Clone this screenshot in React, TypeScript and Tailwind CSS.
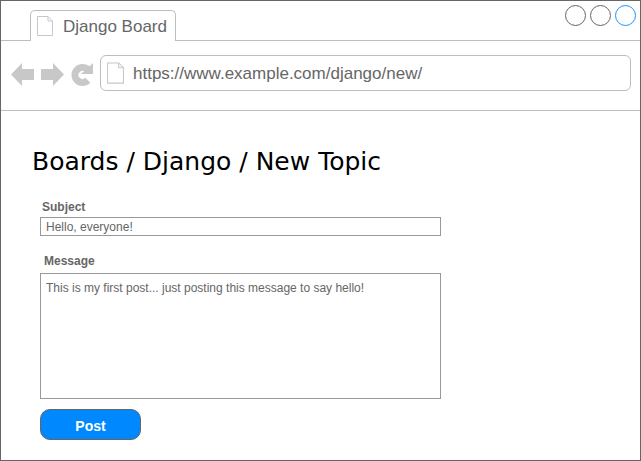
const Page = ({ className }: { className: string }) => (
  <svg viewBox="0 0 16 20" className={className} fill="none">
    <path d="M0.5 0.5H11L15.5 5V19.5H0.5Z" fill="#fff" stroke="#c8c8c8" />
    <path d="M11 0.5V5H15.5" stroke="#c8c8c8" />
  </svg>
);

export default function App() {
  return (
    <div className="flex h-[461px] w-[641px] flex-col border border-[#666] bg-white font-['Liberation_Sans',sans-serif] text-[#666]">
      {/* tab strip */}
      <div className="relative flex h-[40px] shrink-0 items-end border-b border-[#bdbdbd] pl-[29px]">
        <div className="relative top-px flex h-[31px] w-[146px] items-center gap-[10px] rounded-t-[5px] border border-b-0 border-[#bdbdbd] bg-white pl-[6px]">
          <Page className="h-[20px] w-[16px]" />
          <span className="pt-[1px] text-[17px]">Django Board</span>
        </div>
        <div className="absolute right-[4px] top-[4px] flex gap-[4px]">
          <span className="h-[21px] w-[21px] rounded-full border border-[#666]" />
          <span className="h-[21px] w-[21px] rounded-full border border-[#666]" />
          <span className="h-[21px] w-[21px] rounded-full border border-[#1e90ff]" />
        </div>
      </div>

      {/* toolbar */}
      <div className="flex h-[70px] shrink-0 items-center border-b border-[#bdbdbd] pb-[5px] pl-[10px] pr-[9px]">
        <svg viewBox="0 0 84 24" className="mt-[2px] h-[24px] w-[84px] shrink-0" fill="#c8c8c8">
          <path d="M0 12.5L11 1V7H23V18H11V24Z" />
          <path d="M53 12.5L42 1V7H30V18H42V24Z" />
          <circle cx="71.5" cy="13" r="7.5" fill="none" stroke="#c8c8c8" strokeWidth="7" strokeDasharray="36 12" transform="rotate(45 71.5 13)" />
          <path d="M70 12H82V1Z" />
        </svg>
        <div className="ml-[5px] flex h-[36px] flex-1 items-center gap-[9px] rounded-[6px] border border-[#bdbdbd] pl-[6px]">
          <Page className="h-[22px] w-[17px]" />
          <span className="pt-[2px] text-[17px]">https://www.example.com/django/new/</span>
        </div>
      </div>

      {/* form */}
      <div className="flex flex-col pl-[31px] pt-[36px]">
        <h1 className="font-['DejaVu_Sans',sans-serif] text-[25px] leading-[30px] text-black">
          Boards / Django / New Topic
        </h1>
        <div className="ml-[8px] flex w-[401px] flex-col text-[12px]">
          <label className="ml-[2px] mt-[23px] h-[17px] font-bold leading-[14px]">Subject</label>
          <div className="flex h-[19px] items-center border border-[#999] px-[5px]">Hello, everyone!</div>
          <label className="ml-[4px] mt-[18px] h-[19px] font-bold leading-[14px]">Message</label>
          <div className="h-[126px] border border-[#999] px-[5px] py-[7px] leading-[14px]">
            This is my first post... just posting this message to say hello!
          </div>
          <button className="mt-[10px] h-[31px] w-[101px] rounded-[10px] border border-[#666] bg-[#0088ff] pt-[4px] text-[14px] font-bold text-white">
            Post
          </button>
        </div>
      </div>
    </div>
  );
}
